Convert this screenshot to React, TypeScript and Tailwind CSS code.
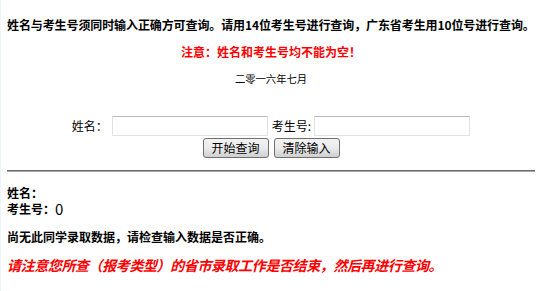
import React from "react";

const font = { fontFamily: '"Noto Sans CJK SC", "Noto Sans", sans-serif' };

export default function App() {
  return (
    <div
      className="w-[550px] h-[291px] bg-white border-l border-[#eef5fb] text-black overflow-hidden"
      style={font}
    >
      <div className="ml-[6px] w-[528px]">
        <div className="pt-[17px] h-[33px] text-[12px] leading-[16px] font-bold whitespace-nowrap tracking-[-0.1px]">
          姓名与考生号须同时输入正确方可查询。请用14位考生号进行查询，广东省考生用10位号进行查询。
        </div>
        <div className="mt-[11px] h-[16px] text-[12px] leading-[16px] font-bold text-[#ff0000] text-center">
          注意：姓名和考生号均不能为空！
        </div>
        <div className="mt-[11px] h-[16px] text-[10.3px] leading-[16px] text-center">
          二零一六年七月
        </div>
        <div className="mt-[29px] flex justify-center items-center h-[20px] text-[12px]">
          <span className="w-[36px] leading-[20px]">姓名：</span>
          <input
            className="ml-[4px] w-[156px] h-[20px] border border-[#dfe3e8] border-t-[#b9bcc1] bg-white outline-none"
            type="text"
          />
          <span className="ml-[4px] leading-[20px]">考生号:</span>
          <input
            className="ml-[3px] w-[156px] h-[20px] border border-[#dfe3e8] border-t-[#b9bcc1] bg-white outline-none"
            type="text"
          />
        </div>
        <div className="mt-[2px] flex justify-center gap-[5px]">
          <button className="w-[66px] h-[20px] text-[12px] leading-[18px] rounded-[3px] border border-[#707070] bg-gradient-to-b from-[#f2f2f2] via-[#ebebeb] to-[#cfcfcf] text-black">
            开始查询
          </button>
          <button className="w-[66px] h-[20px] text-[12px] leading-[18px] rounded-[3px] border border-[#707070] bg-gradient-to-b from-[#f2f2f2] via-[#ebebeb] to-[#cfcfcf] text-black">
            清除输入
          </button>
        </div>
        <div className="mt-[12px] h-[2px] border-t border-[#6a6a6a] border-b border-b-[#a8a8a8]" />
        <div className="mt-[13px] text-[12px] leading-[16px] font-bold">姓名：</div>
        <div className="text-[12px] leading-[16px] font-bold flex items-center">
          考生号：<span className="text-[15px] font-normal">0</span>
        </div>
        <div className="mt-[12px] text-[12px] leading-[16px] font-bold">
          尚无此同学录取数据，请检查输入数据是否正确。
        </div>
        <div className="mt-[10px] text-[14px] leading-[20px] font-bold italic text-[#ff0000] whitespace-nowrap tracking-[-0.4px]">
          请注意您所查（报考类型）的省市录取工作是否结束，然后再进行查询。
        </div>
      </div>
    </div>
  );
}
